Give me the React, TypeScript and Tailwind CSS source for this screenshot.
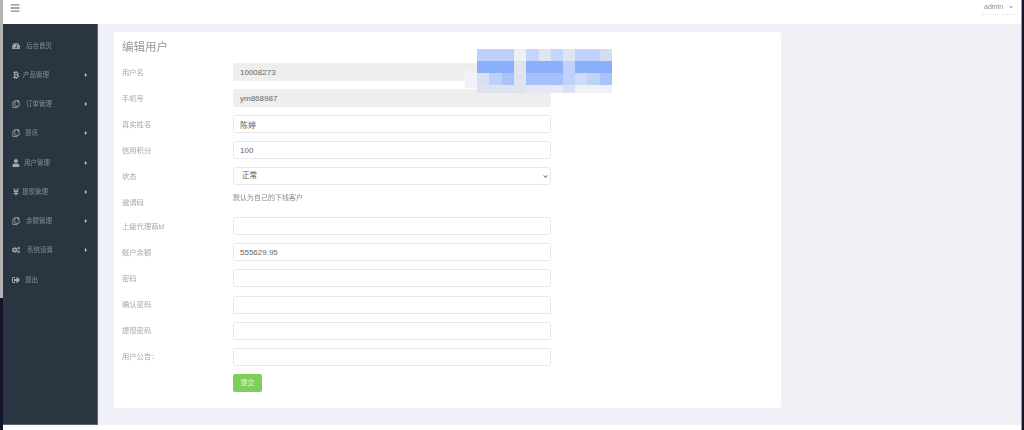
import { FaBars, FaBtc, FaCaretDown, FaCaretRight, FaChevronDown, FaCogs, FaRegCopy, FaSignOutAlt, FaTachometerAlt, FaUser, FaYenSign } from 'react-icons/fa';

const cjk = "font-['Liberation_Sans','Noto_Sans_CJK_SC',sans-serif]";

const menu = [
  { label: '后台首页', icon: FaTachometerAlt, gap: 'ml-[6px]', arrow: false },
  { label: '产品管理', icon: FaBtc, gap: 'ml-[3px]', arrow: true },
  { label: '订单管理', icon: FaRegCopy, gap: 'ml-[6px]', arrow: true },
  { label: '提讯', icon: FaRegCopy, gap: 'ml-[5px]', arrow: true },
  { label: '用户管理', icon: FaUser, gap: 'ml-[4px]', arrow: true },
  { label: '提现管理', icon: FaYenSign, gap: 'ml-[2px]', arrow: true },
  { label: '余额管理', icon: FaRegCopy, gap: 'ml-[6px]', arrow: true },
  { label: '系统设置', icon: FaCogs, gap: 'ml-[7px]', arrow: true },
  { label: '退出', icon: FaSignOutAlt, gap: 'ml-[5px]', arrow: false },
];

const fields = [
  { label: '用户名', value: '10008273', disabled: true },
  { label: '手机号', value: 'ym868987', disabled: true },
  { label: '真实姓名', value: '陈婷' },
  { label: '信用积分', value: '100' },
];

const fieldsBelow = [
  { label: '上级代理商id', value: '' },
  { label: '账户余额', value: '555629.95' },
  { label: '密码', value: '' },
  { label: '确认密码', value: '' },
  { label: '提现密码', value: '' },
  { label: '用户公告：', value: '' },
];

// blurred-out mosaic sitting on top of the form
const mosaic = [
  { h: 'h-[12px]', cells: ['w-[37px] bg-[#bcd0fa]', 'w-[12px] bg-[#eef0f6]', 'w-[13px] bg-[#c4d6fb]', 'w-[12px] bg-[#dfe4ee]', 'w-[12px] bg-[#c4d6fb]', 'w-[12px] bg-[#e0e4ee]', 'w-[25px] bg-[#bfd2fb]', 'w-[12px] bg-[#d5ddf0]'] },
  { h: 'h-[12px]', cells: ['w-[37px] bg-[#8aaffb]', 'w-[12px] bg-[#dfe4ee]', 'w-[37px] bg-[#8aaffb]', 'w-[12px] bg-[#bfd2fb]', 'w-[37px] bg-[#8aaffb]'] },
  { h: 'h-[12px]', cells: ['w-[12px] bg-[#d8e0f0]', 'w-[13px] bg-[#bcd0fa]', 'w-[12px] bg-[#a8c2fa]', 'w-[12px] bg-[#dfe4ee]', 'w-[37px] bg-[#a5c0fa]', 'w-[12px] bg-[#bfd2fb]', 'w-[12px] bg-[#cfdcf6]', 'w-[13px] bg-[#bfd2fb]', 'w-[12px] bg-[#a8c2fa]'] },
  { h: 'h-[8px]', cells: ['w-[37px] bg-[#dde3f0]', 'w-[12px] bg-[#dfe4ee]', 'w-[25px] bg-[#e3e8f3]', 'w-[12px] bg-[#e6eaf4]', 'w-[12px] bg-[#d9e2f5]', 'w-[37px] bg-[#eff1f7]'] },
];

function Row({ label, children, h = 'h-[26px]' }: { label: string; children: React.ReactNode; h?: string }) {
  return (
    <div className={`flex items-start ${h}`}>
      <label className="w-[111px] pt-[4.5px] text-[7.3px] leading-[10px] text-[#a3a6ab] blur-[0.3px]">{label}</label>
      {children}
    </div>
  );
}

function Input({ value, disabled }: { value: string; disabled?: boolean }) {
  return (
    <input
      readOnly
      value={value}
      className={`h-[18px] w-[318px] rounded-[2px] border px-[6px] text-[8px] text-[#666] outline-none ${
        disabled ? 'border-[#eeeeee] bg-[#eeeeee]' : 'border-[#e8e9ee] bg-white'
      }`}
    />
  );
}

export default function App() {
  return (
    <div className={`relative flex h-[430px] w-[1024px] overflow-hidden bg-white ${cjk}`}>
      <div className="flex w-[3px] flex-col">
        <div className="h-[298px] bg-[#b5b5b5]" />
        <div className="flex-1 bg-[#14142a]" />
      </div>

      <div className="flex flex-1 flex-col">
        {/* Top bar */}
        <header className="flex h-[24px] items-start justify-between bg-white pr-[3px]">
          <button className="mt-[3px] ml-[7px] text-[#888]">
            <FaBars className="h-[10px] w-[10px]" />
          </button>
          <div className="flex h-[15px] w-[36px] items-center gap-[5px] border-r border-b border-dotted border-[#e6e6e6] pl-[2px] text-[7px] text-[#8a8a8a] blur-[0.2px]">
            admin
            <FaCaretDown className="h-[6px] w-[6px] text-[#aaa]" />
          </div>
        </header>

        <div className="flex h-[401px]">
          {/* Sidebar */}
          <aside className="w-[95px] shrink-0 border-r border-b border-[#5d6670] bg-[#2a3542] pt-[7px]">
            {menu.map((item) => {
              const Icon = item.icon;
              return (
                <div key={item.label} className="flex h-[29.25px] items-center pr-[8px] pl-[9px] text-[#868d95]">
                  <Icon className="h-[8px] w-[8px] shrink-0 text-[#a4a9af]" />
                  <span className={`${item.gap} text-[6.5px] leading-[10px] blur-[0.3px]`}>{item.label}</span>
                  {item.arrow && <FaCaretRight className="ml-auto h-[6px] w-[6px] text-[#c3c6ca]" />}
                </div>
              );
            })}
          </aside>

          {/* Main */}
          <main className="flex-1 bg-[#f0f1f7] pt-[8px] pl-[16px]">
            <section className="h-[376px] w-[667px] rounded-[2px] bg-white px-[8px] pt-[7px]">
              <h1 className="h-[24px] text-[11.5px] leading-[16px] text-[#999] blur-[0.2px]">编辑用户</h1>
              {fields.map((f) => (
                <Row key={f.label} label={f.label}>
                  <Input value={f.value} disabled={f.disabled} />
                </Row>
              ))}
              <Row label="状态">
                <div className="relative h-[18px] w-[318px]">
                  <select className="block h-full w-full appearance-none rounded-[2px] border border-[#e8e9ee] bg-white px-[8px] text-[7.5px] text-[#555] outline-none">
                    <option>正常</option>
                  </select>
                  <FaChevronDown className="absolute top-[7px] right-[3px] h-[5px] w-[5px] text-[#555]" />
                </div>
              </Row>
              <Row label="邀请码" h="h-[24px]">
                <p className="text-[7px] leading-[10px] text-[#8a8a8a] blur-[0.2px]">默认为自己的下线客户</p>
              </Row>
              {fieldsBelow.map((f) => (
                <Row key={f.label} label={f.label} h="h-[26.2px]">
                  <Input value={f.value} />
                </Row>
              ))}
              <div className="pl-[111px]">
                <button className="block h-[18px] w-[29px] rounded-[2px] bg-[#7ccf5b] text-[7px] text-[#e6f6df]">提交</button>
              </div>
            </section>
          </main>
        </div>
      </div>

      <div className="w-[3px] border-l border-[#9a9ca3] bg-[#14142a]" />

      {/* Mosaic over the form */}
      <div className="absolute top-[70px] left-[465px] h-[18px] w-[12px] bg-[#f0f2f8]" />
      <div className="absolute top-[49px] left-[477px] w-[135px]">
        {mosaic.map((row, i) => (
          <div key={i} className={`flex ${row.h}`}>
            {row.cells.map((c, j) => (
              <div key={j} className={c} />
            ))}
          </div>
        ))}
      </div>
    </div>
  );
}
